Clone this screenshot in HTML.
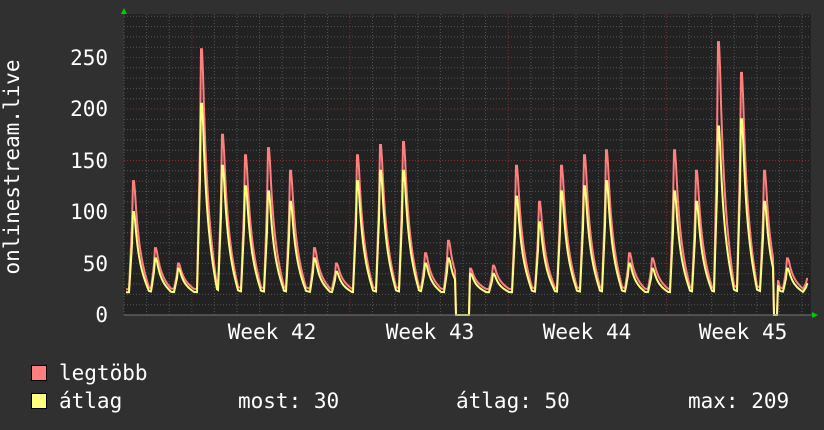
<!DOCTYPE html>
<html><head><meta charset="utf-8"><style>
html,body{margin:0;padding:0;background:#303030;}
svg{display:block}
text{font-family:"DejaVu Sans Mono","Liberation Mono",monospace;fill:#fff;}
</style></head><body>
<svg id="s" width="824" height="430" xmlns="http://www.w3.org/2000/svg">
<rect width="824" height="430" fill="#303030"/>
<rect x="124" y="14" width="687" height="301" fill="#222"/>
<g id="grid"></g>
<polyline id="red" fill="none" stroke="#ff7f7f" stroke-width="2" points=""/>
<polyline id="yel" fill="none" stroke="#ffff7f" stroke-width="2" points=""/>
<line x1="124" y1="315" x2="812" y2="315" stroke="#777" stroke-width="1"/>
<polygon points="121,14 127,14 124,8" fill="#0c0"/>
<polygon points="812,312 812,318 818,315" fill="#0c0"/>
<g font-size="21" text-anchor="end">
<text x="108" y="322">0</text>
<text x="108" y="271">50</text>
<text x="108" y="219">100</text>
<text x="108" y="168">150</text>
<text x="108" y="116">200</text>
<text x="108" y="65">250</text>
</g>
<text transform="translate(19,167) rotate(-90)" font-size="21" text-anchor="middle">onlinestream.live</text>
<g font-size="21" text-anchor="middle">
<text x="272" y="339">Week 42</text>
<text x="430" y="339">Week 43</text>
<text x="587" y="339">Week 44</text>
<text x="743" y="339">Week 45</text>
</g>
<rect x="31.5" y="365.5" width="15" height="15" fill="#ff7f7f" stroke="#000"/>
<rect x="31.5" y="393.5" width="15" height="15" fill="#ffff7f" stroke="#000"/>
<g font-size="21">
<text x="59" y="380">legtöbb</text>
<text x="59" y="408">átlag</text>
<text x="238" y="408">most: 30</text>
<text x="456" y="408">átlag: 50</text>
<text x="688" y="408">max: 209</text>
</g>
</svg>
<script>
var g=document.getElementById('grid'),h='';
for(var v=10;v<=290;v+=10){var y=315-v*1.03;if(y<14)break;var maj=v%50==0;
h+='<line x1="124" x2="811" y1="'+y+'" y2="'+y+'" stroke="'+(maj?'#803030':'#555')+'" stroke-dasharray="1,2"/>';}
for(var i=0;i<31;i++){var x=124+i*22.6;if(x>811)break;var maj=(i%7==3);
h+='<line y1="14" y2="315" x1="'+x+'" x2="'+x+'" stroke="'+(maj?'#803030':'#555')+'" stroke-dasharray="1,2"/>';}
g.innerHTML=h;
var pk=[[133,130,100],[155,65,55],[178,50,45],[201,258,205],[222,175,145],[245,155,125],[268,162,120],[290,140,110],[314,65,55],[336,50,42],[357,155,130],[380,165,140],[403,168,140],[425,60,50],[448,72,55],[470,45,40],[493,48,40],[516,145,115],[539,110,90],[561,145,120],[584,155,125],[606,160,130],[629,60,50],[652,55,45],[674,160,120],[696,140,110],[718,265,183],[741,235,190],[764,140,110],[787,55,45],[807,35,30]];
function val(x,k){var b=k==1?25:22,m=b;for(var j=0;j<pk.length;j++){var d=x-pk[j][0];var p=pk[j][k];var f;
if(d<-4)f=0;else if(d<0)f=(d+4)/4*0.8;else if(d<2)f=1;else f=Math.exp(-(d-2)/4)*0.55+(d<16?0.4*(1-d/16):0);
var vv=b+(p-b)*f;if(vv>m)m=vv;}
if(x>455&&x<470)m=0;if(x>773&&x<778)m=0;return m;}
['red','yel'].forEach(function(id,n){var pts=[];for(var x=126;x<=808;x++){pts.push(x+','+(315-val(x,n+1)*1.03).toFixed(1));}
document.getElementById(id).setAttribute('points',pts.join(' '));});
</script>
</body></html>
